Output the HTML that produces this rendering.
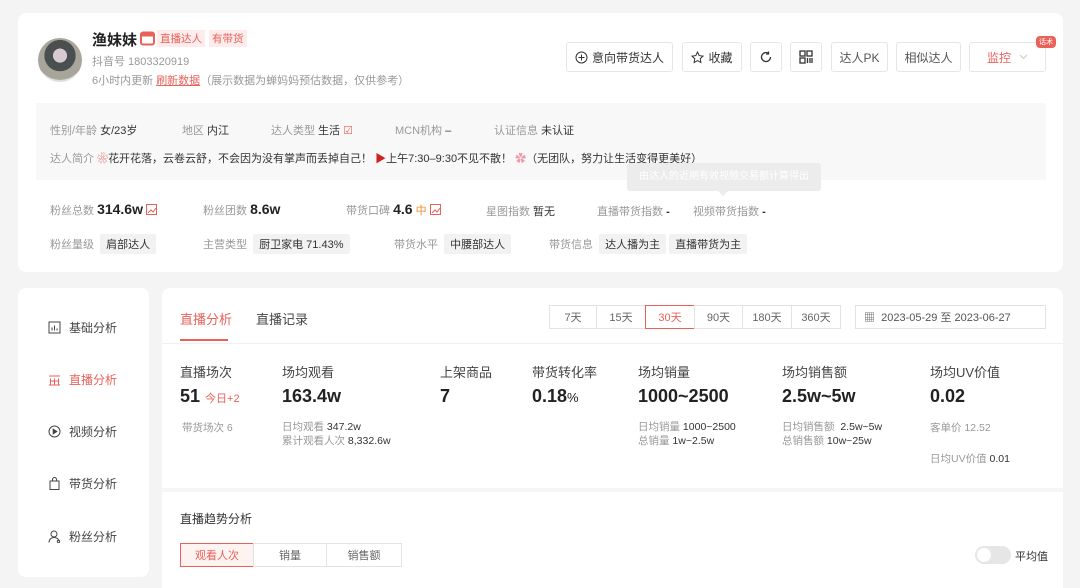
<!DOCTYPE html>
<html><head><meta charset="utf-8">
<style>
*{margin:0;padding:0;box-sizing:border-box}
body{width:1080px;height:585px;overflow:hidden;background:#f4f4f5;font-family:"Liberation Sans","Noto Sans CJK SC",sans-serif;color:#333;position:relative}
.a{position:absolute;white-space:nowrap}
.card{position:absolute;background:#fff;border-radius:8px}
.g{color:#999}
.btn{position:absolute;top:42px;height:30px;border:1px solid #e6e6e6;border-radius:3px;background:#fff;font-size:12px;color:#333;display:flex;align-items:center;justify-content:center;gap:4px}
.tag{display:inline-block;background:#f2f2f2;padding:2px 6px;font-size:11px;color:#333;border-radius:2px}
.nav{position:absolute;left:48px;font-size:12px;color:#444;display:flex;align-items:center;gap:8px}
.d{position:absolute;top:305px;height:24px;border:1px solid #e3e3e3;font-size:11px;color:#666;display:flex;align-items:center;justify-content:center}
.st{position:absolute;top:362px;font-size:13px;color:#444}
.big{position:absolute;top:386px;font-size:18px;font-weight:600;color:#222}
.sm{position:absolute;font-size:10.5px;color:#999}
.sm b{color:#333;font-weight:normal}
svg{display:block}
.tr{display:inline-block;vertical-align:-1px;width:11px;height:11px;border:1px solid #e8625a}
</style></head><body>
<div class="card" style="left:18px;top:13px;width:1045px;height:259px"></div>
<div class="a" style="left:38px;top:38px;width:44px;height:44px;border-radius:50%;background:radial-gradient(circle at 50% 40%,#d9c9d0 0 20%,#4a5050 21% 45%,#a8a59a 46% 70%,#ddd 71%)"></div>
<div class="a" style="left:92px;top:29px;font-size:15px;font-weight:bold;color:#222">渔妹妹</div>
<div class="a" style="left:140px;top:31px"><svg width="15" height="15"><rect x="1" y="1.5" width="13" height="12" rx="2" fill="none" stroke="#e8625a" stroke-width="2"/><rect x="1" y="1.5" width="13" height="4" fill="#e8625a"/></svg></div>
<div class="a" style="left:157px;top:30px;background:#fdeceb;color:#e8625a;font-size:10.5px;padding:1px 3px">直播达人</div>
<div class="a" style="left:209px;top:30px;background:#fdeceb;color:#e8625a;font-size:10.5px;padding:1px 3px">有带货</div>
<div class="a g" style="left:92px;top:53px;font-size:11px">抖音号 1803320919</div>
<div class="a g" style="left:92px;top:72px;font-size:11px">6小时内更新 <span style="color:#e8625a;text-decoration:underline">刷新数据</span>（展示数据为蝉妈妈预估数据，仅供参考）</div>

<div class="btn" style="left:566px;width:107px"><svg width="13" height="13"><circle cx="6.5" cy="6.5" r="5.5" fill="none" stroke="#333"/><path d="M6.5 3.5v6M3.5 6.5h6" stroke="#333"/></svg>意向带货达人</div>
<div class="btn" style="left:682px;width:60px"><svg width="13" height="13"><path d="M6.5 1l1.7 3.6 3.8.5-2.8 2.6.7 3.8-3.4-1.9-3.4 1.9.7-3.8L1 5.1l3.8-.5z" fill="none" stroke="#333"/></svg>收藏</div>
<div class="btn" style="left:750px;width:32px"><svg width="14" height="14"><path d="M11.5 7a4.5 4.5 0 1 1-2-3.7" fill="none" stroke="#333" stroke-width="1.3"/><path d="M9.5 1.5v2.5h-2.5" fill="none" stroke="#333" stroke-width="1.3"/></svg></div>
<div class="btn" style="left:790px;width:32px"><svg width="14" height="14" fill="none" stroke="#333" stroke-width="1.3"><rect x="1" y="1" width="5" height="5"/><rect x="8" y="1" width="5" height="5"/><rect x="1" y="8" width="5" height="5"/><path d="M8.5 8v5M11 8v5M13 8v5"/></svg></div>
<div class="btn" style="left:831px;width:57px;color:#555">达人PK</div>
<div class="btn" style="left:896px;width:65px;color:#555">相似达人</div>
<div class="btn" style="left:969px;width:77px;color:#e8625a;gap:8px">监控 <svg width="9" height="6"><path d="M1 1l3.5 3.5L8 1" fill="none" stroke="#ccc"/></svg></div>
<div class="a" style="left:1036px;top:36px;background:#e8625a;color:#fff;font-size:7px;padding:1px 3px;border-radius:4px">话术</div>

<div class="a" style="left:36px;top:103px;width:1010px;height:77px;background:#f8f8f8"></div>
<div class="a" style="left:50px;top:122px;font-size:11px"><span class="g">性别/年龄</span> 女/23岁</div>
<div class="a" style="left:182px;top:122px;font-size:11px"><span class="g">地区</span> 内江</div>
<div class="a" style="left:271px;top:122px;font-size:11px"><span class="g">达人类型</span> 生活 <span style="color:#e8625a">☑</span></div>
<div class="a" style="left:395px;top:122px;font-size:11px"><span class="g">MCN机构</span> –</div>
<div class="a" style="left:494px;top:122px;font-size:11px"><span class="g">认证信息</span> 未认证</div>
<div class="a" style="left:50px;top:150px;font-size:11px"><span class="g">达人简介</span> <span style="color:#d55">❀</span>花开花落，云卷云舒，不会因为没有掌声而丢掉自己！ <span style="color:#c22">▶</span>上午7:30–9:30不见不散！ <span style="color:#e9a">✿</span>（无团队，努力让生活变得更美好）</div>
<div class="a" style="left:627px;top:163px;width:194px;height:28px;background:#ececec;border-radius:3px;color:#fff;font-size:10px;line-height:28px;text-align:center">由达人的近期有效视频交易额计算得出</div>
<div class="a" style="left:718px;top:191px;width:0;height:0;border-left:5px solid transparent;border-right:5px solid transparent;border-top:5px solid #ececec"></div>

<div class="a" style="left:50px;top:201px;font-size:11px"><span class="g">粉丝总数</span> <b style="font-size:14px;color:#222">314.6w</b> <svg class="tr" style="display:inline-block" width="11" height="11"><path d="M1 8l3-3 2 2 3-4" fill="none" stroke="#e8625a"/></svg></div>
<div class="a" style="left:203px;top:201px;font-size:11px"><span class="g">粉丝团数</span> <b style="font-size:14px;color:#222">8.6w</b></div>
<div class="a" style="left:346px;top:201px;font-size:11px"><span class="g">带货口碑</span> <b style="font-size:14px;color:#222">4.6</b> <span style="color:#f08a2a">中</span> <svg class="tr" style="display:inline-block" width="11" height="11"><path d="M1 8l3-3 2 2 3-4" fill="none" stroke="#e8625a"/></svg></div>
<div class="a" style="left:486px;top:203px;font-size:11px"><span class="g">星图指数</span> 暂无</div>
<div class="a" style="left:597px;top:203px;font-size:11px"><span class="g">直播带货指数</span> <b>-</b></div>
<div class="a" style="left:693px;top:203px;font-size:11px"><span class="g">视频带货指数</span> <b>-</b></div>
<div class="a" style="left:50px;top:234px;font-size:11px"><span class="g">粉丝量级</span>&nbsp; <span class="tag">肩部达人</span></div>
<div class="a" style="left:203px;top:234px;font-size:11px"><span class="g">主营类型</span>&nbsp; <span class="tag">厨卫家电 71.43%</span></div>
<div class="a" style="left:394px;top:234px;font-size:11px"><span class="g">带货水平</span>&nbsp; <span class="tag">中腰部达人</span></div>
<div class="a" style="left:549px;top:234px;font-size:11px"><span class="g">带货信息</span>&nbsp; <span class="tag">达人播为主</span>&nbsp;<span class="tag">直播带货为主</span></div>

<div class="card" style="left:18px;top:288px;width:131px;height:289px"></div>
<div class="nav" style="top:319px"><svg width="13" height="13" fill="none" stroke="#444"><rect x="1" y="1" width="11" height="11"/><path d="M4 9.5v-3M6.5 9.5v-5M9 9.5v-2"/></svg>基础分析</div>
<div class="nav" style="top:371px;color:#e8625a"><svg width="13" height="13" fill="none" stroke="#e8625a"><path d="M1 3h11M1 12h11M2.5 5.5v6M6.5 5.5v6M10.5 5.5v6M2.5 8h8"/></svg>直播分析</div>
<div class="nav" style="top:423px"><svg width="13" height="13" fill="none" stroke="#444"><circle cx="6.5" cy="6.5" r="5.5"/><path d="M5.2 4.2v4.6l3.6-2.3z" fill="#444"/></svg>视频分析</div>
<div class="nav" style="top:475px"><svg width="13" height="13" fill="none" stroke="#444"><rect x="2" y="4" width="9" height="8.5"/><path d="M4.5 4V2.5a2 2 0 0 1 4 0V4"/></svg>带货分析</div>
<div class="nav" style="top:528px"><svg width="13" height="13" fill="none" stroke="#444"><circle cx="6" cy="4" r="3"/><path d="M1 12.5c0-3 2.2-5 5-5s4.5 1.5 5 3.5"/><circle cx="10.5" cy="11.5" r="1.2"/></svg>粉丝分析</div>

<div class="card" style="left:162px;top:288px;width:901px;height:300px;border-radius:8px 8px 0 0"></div>
<div class="a" style="left:162px;top:343px;width:901px;height:1px;background:#f0f0f0"></div>
<div class="a" style="left:162px;top:488px;width:901px;height:4px;background:#f6f6f6"></div>
<div class="a" style="left:180px;top:309px;font-size:13px;color:#e8625a">直播分析</div>
<div class="a" style="left:180px;top:339px;width:48px;height:2px;background:#e8625a"></div>
<div class="a" style="left:256px;top:309px;font-size:13px;color:#444">直播记录</div>

<div class="d" style="left:549px;width:48px">7天</div>
<div class="d" style="left:596px;width:50px">15天</div>
<div class="d" style="left:645px;width:50px;border-color:#e8625a;color:#e8625a">30天</div>
<div class="d" style="left:694px;width:49px">90天</div>
<div class="d" style="left:742px;width:50px">180天</div>
<div class="d" style="left:791px;width:50px">360天</div>
<div class="d" style="left:855px;width:191px;justify-content:flex-start;padding-left:8px;color:#555">▦&nbsp; 2023-05-29 至 2023-06-27</div>

<div class="st" style="left:180px">直播场次</div>
<div class="st" style="left:282px">场均观看</div>
<div class="st" style="left:440px">上架商品</div>
<div class="st" style="left:532px">带货转化率</div>
<div class="st" style="left:638px">场均销量</div>
<div class="st" style="left:782px">场均销售额</div>
<div class="st" style="left:930px">场均UV价值</div>
<div class="big" style="left:180px">51 <span style="font-size:11px;color:#e8625a;font-weight:normal">今日+2</span></div>
<div class="big" style="left:282px">163.4w</div>
<div class="big" style="left:440px">7</div>
<div class="big" style="left:532px">0.18<span style="font-size:13px;font-weight:normal">%</span></div>
<div class="big" style="left:638px">1000~2500</div>
<div class="big" style="left:782px">2.5w~5w</div>
<div class="big" style="left:930px">0.02</div>
<div class="sm" style="left:182px;top:420px">带货场次 6</div>
<div class="sm" style="left:282px;top:419px">日均观看 <b>347.2w</b></div>
<div class="sm" style="left:282px;top:433px">累计观看人次 <b>8,332.6w</b></div>
<div class="sm" style="left:638px;top:419px">日均销量 <b>1000~2500</b></div>
<div class="sm" style="left:638px;top:433px">总销量 <b>1w~2.5w</b></div>
<div class="sm" style="left:782px;top:419px">日均销售额 &nbsp;<b>2.5w~5w</b></div>
<div class="sm" style="left:782px;top:433px">总销售额 <b>10w~25w</b></div>
<div class="sm" style="left:930px;top:420px">客单价 12.52</div>
<div class="sm" style="left:930px;top:451px">日均UV价值 <b>0.01</b></div>

<div class="a" style="left:180px;top:510px;font-size:12px">直播趋势分析</div>
<div class="d" style="left:180px;top:543px;width:74px;border-color:#e8625a;color:#e8625a;background:#fdf3f1">观看人次</div>
<div class="d" style="left:253px;top:543px;width:74px">销量</div>
<div class="d" style="left:326px;top:543px;width:76px">销售额</div>
<div class="a" style="left:975px;top:546px;width:36px;height:18px;border-radius:9px;background:#e6e6e6"><div style="position:absolute;left:2px;top:2px;width:14px;height:14px;border-radius:50%;background:#fff"></div></div>
<div class="a" style="left:1015px;top:548px;font-size:11px">平均值</div>
</body></html>
